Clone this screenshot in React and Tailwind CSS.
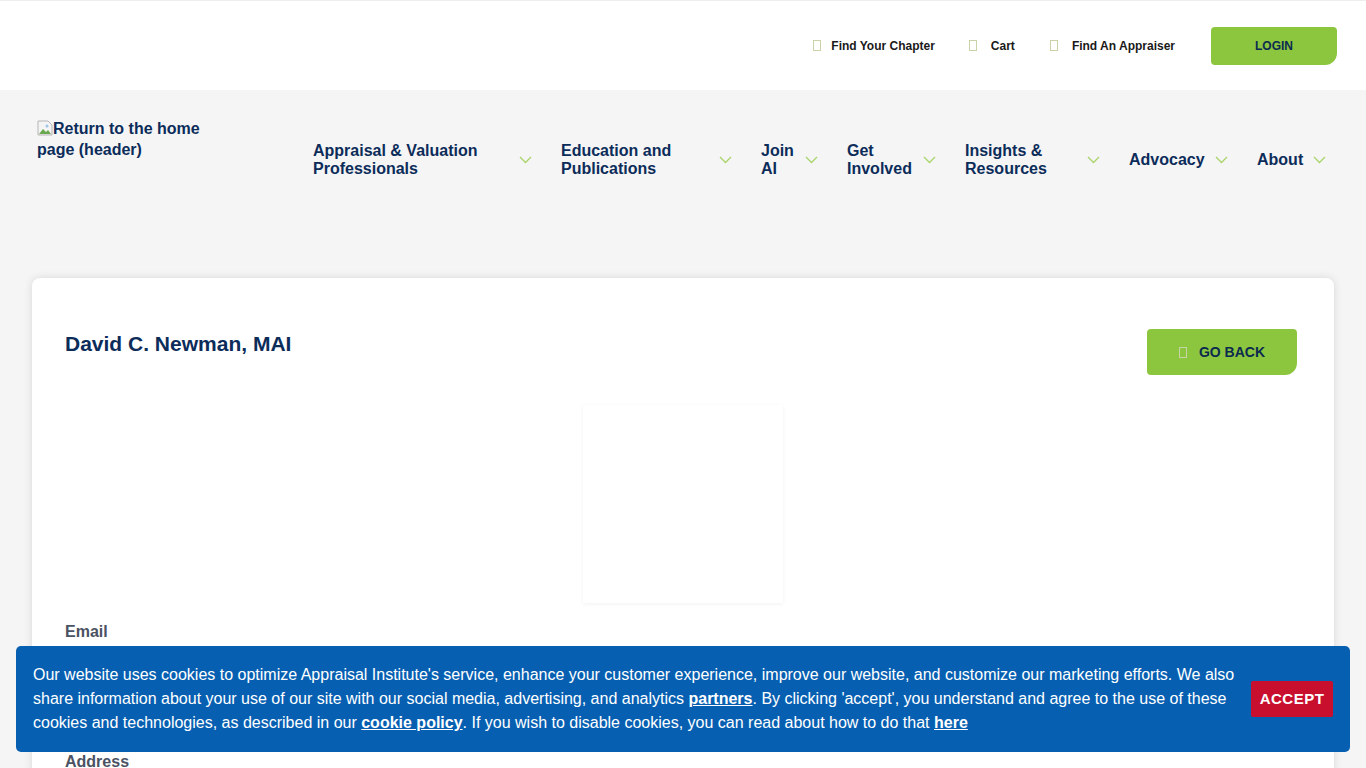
import React from 'react';

const navItems = [
  { label: 'Appraisal & Valuation Professionals', w: 'w-[198px]' },
  { label: 'Education and Publications', w: 'w-[150px]' },
  { label: 'Join AI', w: 'w-[36px]' },
  { label: 'Get Involved', w: 'w-[68px]' },
  { label: 'Insights & Resources', w: 'w-[114px]' },
  { label: 'Advocacy', w: 'w-[78px]' },
  { label: 'About', w: 'w-[48px]' },
];

const GlyphBox = ({ className = '' }) => (
  <span className={`inline-block w-[8px] h-[11px] border border-[#c9d3a8] ${className}`}></span>
);

const Chevron = () => (
  <svg width="13" height="8" viewBox="0 0 13 8" className="shrink-0">
    <path d="M1 1l5.5 5.5L12 1" fill="none" stroke="#a9d46a" strokeWidth="1.3" />
  </svg>
);

const BrokenImage = () => (
  <svg width="16" height="16" viewBox="0 0 16 16" className="inline-block align-[-2px]">
    <path d="M1 1h10l4 4v10H1z" fill="#f4f4f4" stroke="#b5b5b5" />
    <path d="M2 14l4-5 3 3 2-2 3 4z" fill="#6aa84f" />
    <circle cx="10" cy="6" r="1.5" fill="#9ec5e8" />
  </svg>
);

export default function App() {
  return (
    <div className="min-h-screen bg-[#f5f5f5] font-['Liberation_Sans',Arial,sans-serif]">
      {/* Utility bar */}
      <div className="h-[90px] bg-white flex items-center justify-end pr-[29px] border-t border-[#eeeeee]">
        <div className="flex items-center text-[12px] font-bold text-[#1a1a1a]">
          <a className="flex items-center gap-[10px] mr-[34px]"><GlyphBox />Find Your Chapter</a>
          <a className="flex items-center gap-[14px] mr-[35px]"><GlyphBox />Cart</a>
          <a className="flex items-center gap-[14px] mr-[36px]"><GlyphBox />Find An Appraiser</a>
          <button className="w-[126px] h-[38px] bg-[#8cc63f] text-[#0b2a4f] text-[12px] font-bold rounded-t-[4px] rounded-bl-[4px] rounded-br-[12px]">
            LOGIN
          </button>
        </div>
      </div>

      {/* Main nav */}
      <div className="flex items-start pl-[37px] pt-[28px] h-[188px]">
        <div className="w-[180px] text-[16px] leading-[21px] font-bold text-[#0c2c5a]">
          <BrokenImage />Return to the home page (header)
        </div>
        <nav className="ml-[96px] mt-[24px] flex items-center gap-[29px]">
          {navItems.map((item) => (
            <a key={item.label} className="flex items-center gap-[8px] cursor-pointer">
              <span className={`${item.w} text-[16px] leading-[18px] font-bold text-[#0c2c5a]`}>{item.label}</span>
              <Chevron />
            </a>
          ))}
        </nav>
      </div>

      {/* Content card */}
      <div className="mx-[32px] bg-white rounded-t-[8px] shadow-[0_0_8px_rgba(0,0,0,0.12)] pb-[40px]">
        <div className="flex items-start justify-between pl-[33px] pr-[37px] pt-[51px]">
          <h1 className="text-[21px] leading-[30px] font-bold text-[#0c2c5a]">David C. Newman, MAI</h1>
          <button className="w-[150px] h-[46px] bg-[#8cc63f] text-[#0b2a4f] text-[14px] font-bold rounded-t-[4px] rounded-bl-[4px] rounded-br-[12px] flex items-center justify-center gap-[12px]">
            <GlyphBox className="border-[#2e5a2e]" />GO BACK
          </button>
        </div>
        <div className="flex justify-center mt-[30px]">
          <div className="w-[200px] h-[198px] bg-white shadow-[0_1px_4px_rgba(0,0,0,0.06)]"></div>
        </div>
        <div className="pl-[33px] pt-[19px] text-[16px] font-bold text-[#4a5263]">
          <div className="leading-[20px]">Email</div>
          <div className="h-[110px]"></div>
          <div className="leading-[20px]">Address</div>
        </div>
      </div>

      {/* Cookie banner */}
      <div className="fixed left-[16px] right-[16px] top-[646px] h-[106px] bg-[#075fb2] rounded-[5px] flex items-center pl-[17px] pr-[17px]">
        <p className="w-[1205px] text-white text-[16px] leading-[24px]">
          Our website uses cookies to optimize Appraisal Institute's service, enhance your customer experience, improve our website, and customize our marketing efforts. We also share information about your use of our site with our social media, advertising, and analytics{' '}
          <a className="font-bold underline">partners</a>. By clicking 'accept', you understand and agree to the use of these cookies and technologies, as described in our{' '}
          <a className="font-bold underline">cookie policy</a>. If you wish to disable cookies, you can read about how to do that{' '}
          <a className="font-bold underline">here</a>
        </p>
        <button className="ml-auto w-[82px] h-[36px] bg-[#c8102e] text-white text-[15px] font-bold tracking-[0.5px] rounded-[2px]">
          ACCEPT
        </button>
      </div>
    </div>
  );
}
